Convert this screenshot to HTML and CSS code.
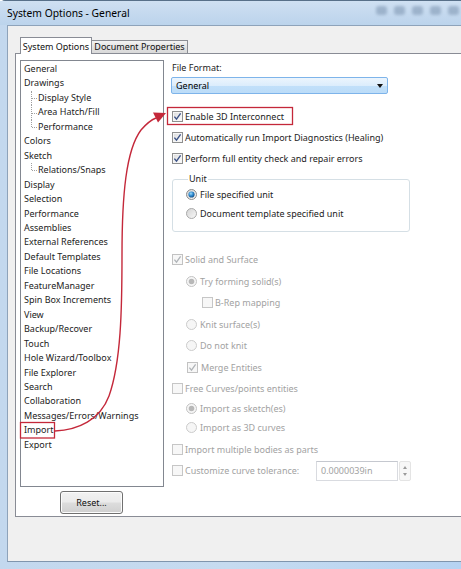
FILE: index.html
```html
<!DOCTYPE html>
<html>
<head>
<meta charset="utf-8">
<link rel="stylesheet" href="styles.css">
</head>
<body>
<svg class="defs" width="0" height="0" aria-hidden="true">
  <defs>
    <linearGradient id="gBox" x1="0" y1="0" x2="1" y2="1">
      <stop offset="0" stop-color="#dedede"/>
      <stop offset="1" stop-color="#fbfbfb"/>
    </linearGradient>
    <linearGradient id="gRad" x1="0" y1="0" x2="1" y2="1">
      <stop offset="0" stop-color="#d2d2d2"/>
      <stop offset="1" stop-color="#fafafa"/>
    </linearGradient>
    <radialGradient id="gDot" cx="0.4" cy="0.35" r="0.7">
      <stop offset="0" stop-color="#9fdcfb"/>
      <stop offset="0.5" stop-color="#2f8ad0"/>
      <stop offset="1" stop-color="#14497c"/>
    </radialGradient>
    <symbol id="cb-on" viewBox="0 0 11 11">
      <rect x="0.5" y="0.5" width="10" height="10" fill="#f6f6f6" stroke="#8e8f8f"/>
      <rect x="2" y="2" width="7" height="7" fill="url(#gBox)"/>
      <path d="M2.4 5.6 L4.5 8.2 L8.6 2.4" fill="none" stroke="#3c5387" stroke-width="1.4"/>
    </symbol>
    <symbol id="cb-dis-on" viewBox="0 0 11 11">
      <rect x="0.5" y="0.5" width="10" height="10" fill="#f7f7f7" stroke="#c2c2c2"/>
      <path d="M2.4 5.6 L4.5 8.2 L8.6 2.4" fill="none" stroke="#b0b4b8" stroke-width="1.3"/>
    </symbol>
    <symbol id="cb-dis" viewBox="0 0 11 11">
      <rect x="0.5" y="0.5" width="10" height="10" fill="#f7f7f7" stroke="#c6c6c6"/>
    </symbol>
    <symbol id="rb-on" viewBox="0 0 11 11">
      <circle cx="5.5" cy="5.5" r="5" fill="url(#gRad)" stroke="#8c8c8c"/>
      <circle cx="5.5" cy="5.5" r="3.1" fill="url(#gDot)"/>
    </symbol>
    <symbol id="rb-off" viewBox="0 0 11 11">
      <circle cx="5.5" cy="5.5" r="5" fill="url(#gRad)" stroke="#a9a9a9"/>
    </symbol>
    <symbol id="rb-dis-on" viewBox="0 0 11 11">
      <circle cx="5.5" cy="5.5" r="5" fill="#f6f6f6" stroke="#c2c2c2"/>
      <circle cx="5.5" cy="5.5" r="2.8" fill="#b8b8b8"/>
    </symbol>
    <symbol id="rb-dis" viewBox="0 0 11 11">
      <circle cx="5.5" cy="5.5" r="5" fill="#f6f6f6" stroke="#cbcbcb"/>
    </symbol>
  </defs>
</svg>
<div class="window">
  <div class="titlebar">
    <span class="title">System Options - General</span>
    <div class="caption-btns">
      <span class="blob"></span><span class="blob"></span><span class="blob"></span><span class="blob"></span><span class="blob"></span>
    </div>
  </div>
  <div class="client">
    <div class="tabs">
      <div class="tab active">System Options</div>
      <div class="tab">Document Properties</div>
    </div>
    <div class="panel">
      <div class="leftcol">
        <ul class="tree">
          <li>General</li>
          <li>Drawings</li>
          <li class="child">Display Style</li>
          <li class="child">Area Hatch/Fill</li>
          <li class="child last">Performance</li>
          <li>Colors</li>
          <li>Sketch</li>
          <li class="child last">Relations/Snaps</li>
          <li>Display</li>
          <li>Selection</li>
          <li>Performance</li>
          <li>Assemblies</li>
          <li>External References</li>
          <li>Default Templates</li>
          <li>File Locations</li>
          <li>FeatureManager</li>
          <li>Spin Box Increments</li>
          <li>View</li>
          <li>Backup/Recover</li>
          <li>Touch</li>
          <li>Hole Wizard/Toolbox</li>
          <li>File Explorer</li>
          <li>Search</li>
          <li>Collaboration</li>
          <li>Messages/Errors/Warnings</li>
          <li>Import</li>
          <li>Export</li>
        </ul>
        <button class="btn">Reset...</button>
      </div>
      <div class="rightcol">
        <div class="label">File Format:</div>
        <div class="combo"><span>General</span><span class="arrow"></span></div>
        <div class="row first"><svg class="ic"><use href="#cb-on"/></svg><span>Enable 3D Interconnect</span></div>
        <div class="row"><svg class="ic"><use href="#cb-on"/></svg><span>Automatically run Import Diagnostics (Healing)</span></div>
        <div class="row"><svg class="ic"><use href="#cb-on"/></svg><span>Perform full entity check and repair errors</span></div>
        <fieldset class="group">
          <legend>Unit</legend>
          <div class="row r19"><svg class="ic"><use href="#rb-on"/></svg><span class="rt">File specified unit</span></div>
          <div class="row r19"><svg class="ic"><use href="#rb-off"/></svg><span class="rt">Document template specified unit</span></div>
        </fieldset>
        <div class="dis">
          <div class="row solid"><svg class="ic"><use href="#cb-dis-on"/></svg><span>Solid and Surface</span></div>
          <div class="row l1"><svg class="ic"><use href="#rb-dis-on"/></svg><span class="rt">Try forming solid(s)</span></div>
          <div class="row l2"><svg class="ic"><use href="#cb-dis"/></svg><span>B-Rep mapping</span></div>
          <div class="row l1"><svg class="ic"><use href="#rb-dis"/></svg><span class="rt">Knit surface(s)</span></div>
          <div class="row l1"><svg class="ic"><use href="#rb-dis"/></svg><span class="rt">Do not knit</span></div>
          <div class="row l1b"><svg class="ic"><use href="#cb-dis-on"/></svg><span class="rt">Merge Entities</span></div>
          <div class="row"><svg class="ic"><use href="#cb-dis"/></svg><span>Free Curves/points entities</span></div>
          <div class="row l1 short"><svg class="ic"><use href="#rb-dis-on"/></svg><span class="rt">Import as sketch(es)</span></div>
          <div class="row l1 short"><svg class="ic"><use href="#rb-dis"/></svg><span class="rt">Import as 3D curves</span></div>
          <div class="row bodies"><svg class="ic"><use href="#cb-dis"/></svg><span>Import multiple bodies as parts</span></div>
          <div class="row"><svg class="ic"><use href="#cb-dis"/></svg><span class="tol-label">Customize curve tolerance:</span>
            <div class="field">0.0000039in</div>
            <div class="spin"><span class="up"></span><span class="down"></span></div>
          </div>
        </div>
      </div>
    </div>
  </div>
</div>
<svg class="annot" width="461" height="569" viewBox="0 0 461 569" aria-hidden="true">
  <rect x="167.5" y="107.5" width="125" height="17" fill="none" stroke="#c4283a" stroke-width="1.3"/>
  <rect x="20.5" y="422.5" width="34" height="15.5" fill="none" stroke="#c4283a" stroke-width="1.3"/>
  <path d="M55 431 C78 430 100 420 109 396 C121 362 122 310 122 255 C122 195 126 150 141 130 C147 123 151 120 156 118" fill="none" stroke="#c4283a" stroke-width="1.4"/>
  <polygon points="166,113 153,112.5 158,122.5" fill="#c4283a"/>
</svg>
</body>
</html>
```
FILE: styles.css
```css
body {
  margin: 0;
  width: 461px;
  height: 569px;
  overflow: hidden;
  position: relative;
  font-family: "Noto Sans", "Open Sans", sans-serif;
  font-size: 9px;
  color: #1c1c1c;
}

.defs {
  display: block;
  width: 0;
  height: 0;
}

.window {
  height: 569px;
  box-sizing: border-box;
  display: flex;
  flex-direction: column;
  border-top: 1px solid #587089;
  border-radius: 5px 0 0 0;
  background: linear-gradient(90deg, #c3d8ee 0%, #c6dbf0 50%, #b6d3f2 100%);
}

.titlebar {
  height: 24px;
  flex: none;
  display: flex;
  align-items: center;
  justify-content: space-between;
  background: linear-gradient(180deg, #cfe0f2 0%, #c3d8ee 60%, #bcd4ec 100%);
}

.title {
  padding-left: 7px;
  font-size: 10.3px;
  color: #000;
  line-height: 24px;
}

.caption-btns {
  display: flex;
  gap: 7px;
  padding-right: 2px;
  margin-top: -6px;
}

.blob {
  width: 11px;
  height: 9px;
  border-radius: 3px;
  background: #8fa6c0;
  filter: blur(1.6px);
  opacity: 0.75;
}

.client {
  flex: 1;
  margin-left: 7px;
  margin-bottom: 7px;
  background: #f0f0f0;
  border-top: 1px solid #8ea3ba;
  border-left: 1px solid #8ea3ba;
  border-bottom: 1px solid #7f95ad;
  display: flex;
  flex-direction: column;
}

.tabs {
  display: flex;
  align-items: flex-end;
  padding: 11px 0 0 12px;
  height: 16px;
  position: relative;
  z-index: 1;
}

.tab {
  box-sizing: border-box;
  height: 13px;
  border: 1px solid #8c8e94;
  border-bottom: none;
  padding: 0 3px;
  font-size: 9px;
  line-height: 12px;
  background: linear-gradient(180deg, #f3f3f3, #e3e3e3 50%, #d9d9d9);
  color: #111;
}

.tab.active {
  height: 17px;
  width: 72px;
  margin-bottom: -1px;
  background: #fff;
  line-height: 17px;
  text-align: center;
  padding: 0;
  border-color: #898c95;
}

.tab.active + .tab {
  border-left: none;
  width: 96px;
  text-align: center;
  padding: 0;
}

.panel {
  margin-left: 7px;
  width: 460px;
  height: 464px;
  box-sizing: border-box;
  background: #fff;
  border: 1px solid #898c95;
  display: flex;
  padding: 6px 0 0 4px;
}

.leftcol {
  width: 144px;
  flex: none;
  display: flex;
  flex-direction: column;
}

.tree {
  list-style: none;
  margin: 0;
  padding: 1px 0 0 0;
  height: 427px;
  box-sizing: border-box;
  border: 1px solid #828790;
}

.tree li {
  line-height: 14.46px;
  height: 14.46px;
  padding-left: 3px;
  white-space: nowrap;
  position: relative;
}

.tree li.child {
  padding-left: 17px;
}

.tree li.child::before {
  content: "";
  position: absolute;
  left: 10px;
  top: 0;
  height: 100%;
  border-left: 1px dotted #a0a0a0;
}

.tree li.child.last::before {
  height: 50%;
}

.tree li.child::after {
  content: "";
  position: absolute;
  left: 11px;
  top: 50%;
  width: 5px;
  border-top: 1px dotted #a0a0a0;
}

.btn {
  margin: 4px 0 0 40px;
  width: 63px;
  height: 23px;
  border: 1px solid #707070;
  border-radius: 3px;
  background: linear-gradient(180deg, #f2f2f2 0%, #ebebeb 48%, #dddddd 52%, #cfcfcf 100%);
  box-shadow: inset 0 0 0 1px #fcfcfc;
  font-family: "Noto Sans", "Open Sans", sans-serif;
  font-size: 9px;
  color: #111;
  padding: 0;
}

.rightcol {
  margin-left: 8px;
  display: flex;
  flex-direction: column;
  align-items: flex-start;
}

.label {
  line-height: 14px;
  margin-top: 1px;
}

.combo {
  margin: 2px 0 0 -1px;
  width: 217px;
  height: 17px;
  box-sizing: border-box;
  border: 1px solid #7eb4ea;
  border-radius: 2px;
  background: linear-gradient(180deg, #ecf5fd 0%, #dcedfc 50%, #c1e0fa 51%, #bcdcf8 100%);
  display: flex;
  align-items: center;
  justify-content: space-between;
  padding: 0 4px 0 4px;
  color: #000;
}

.arrow {
  width: 0;
  height: 0;
  border-left: 3.5px solid transparent;
  border-right: 3.5px solid transparent;
  border-top: 4px solid #111;
}

.row {
  height: 21px;
  display: flex;
  align-items: center;
  white-space: nowrap;
}

.row.first {
  margin-top: 11.5px;
}

.ic {
  width: 11px;
  height: 11px;
  flex: none;
  margin-right: 2px;
}

.rt {
  margin-left: 1px;
}

.group {
  margin: 4.5px 0 0 0;
  width: 238px;
  box-sizing: border-box;
  border: 1px solid #d5dfe5;
  border-radius: 3px;
  padding: 0 0 8px 13px;
  min-inline-size: 0;
}

.group legend {
  padding: 0 1px;
  margin-left: 2px;
  line-height: 12px;
  color: #1c1c1c;
}

.row.r19 {
  height: 19px;
}

.dis {
  color: #a2a2a2;
  display: flex;
  flex-direction: column;
  align-items: flex-start;
}

.row.solid {
  margin-top: 17px;
  height: 21.5px;
}

.dis .row {
  height: 21.5px;
}

.dis .row.l1 {
  padding-left: 14px;
}

.dis .row.l1b {
  padding-left: 15px;
}

.dis .row.l2 {
  padding-left: 30px;
}

.dis .row.short {
  height: 18.5px;
}

.dis .row.bodies {
  margin-top: 2px;
}

.tol-label {
  width: 131px;
}

.field {
  width: 82px;
  height: 20px;
  box-sizing: border-box;
  border: 1px solid #d9dbe0;
  border-top-color: #c5c8cf;
  padding-left: 4px;
  line-height: 18px;
  background: #fff;
  color: #a2a2a2;
}

.spin {
  width: 12px;
  height: 20px;
  margin-left: 1px;
  box-sizing: border-box;
  border: 1px solid #e4e4e4;
  border-radius: 2px;
  background: #f7f7f7;
  display: flex;
  flex-direction: column;
  align-items: center;
  justify-content: center;
  gap: 4px;
}

.spin .up {
  width: 0;
  height: 0;
  border-left: 2.5px solid transparent;
  border-right: 2.5px solid transparent;
  border-bottom: 3px solid #9a9a9a;
}

.spin .down {
  width: 0;
  height: 0;
  border-left: 2.5px solid transparent;
  border-right: 2.5px solid transparent;
  border-top: 3px solid #9a9a9a;
}

.annot {
  position: absolute;
  left: 0;
  top: 0;
  pointer-events: none;
}
```
